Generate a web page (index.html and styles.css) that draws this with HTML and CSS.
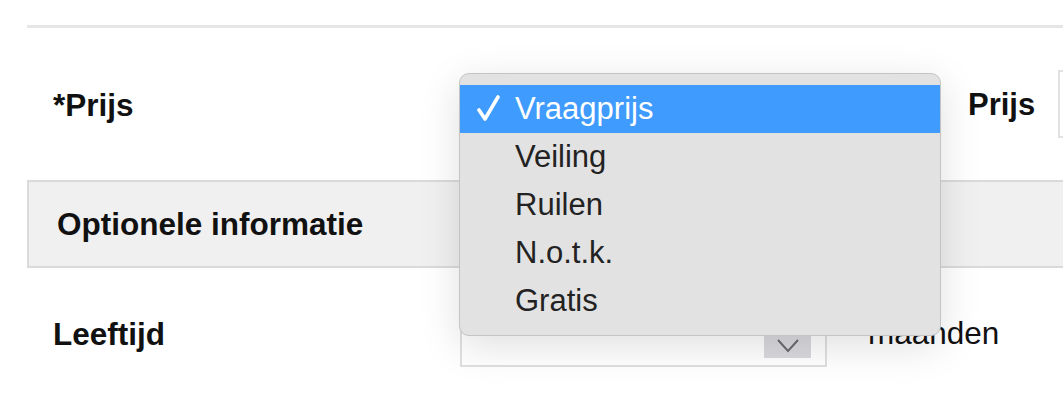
FILE: index.html
```html
<!DOCTYPE html>
<html lang="nl">
<head>
<meta charset="utf-8">
<title>Prijs</title>
<link rel="stylesheet" href="styles.css">
</head>
<body>
<div class="form">
  <div class="row row-price">
    <div class="label">*Prijs</div>
    <div class="field"></div>
    <div class="label-right">Prijs</div>
    <div class="input"></div>
  </div>
  <div class="section">Optionele informatie</div>
  <div class="row row-age">
    <div class="label">Leeftijd</div>
    <div class="field">
      <div class="select">
        <span class="arrow">
          <svg width="47" height="46" viewBox="0 0 47 46"><path d="M14 28 L24 39 L34 28" fill="none" stroke="#6b6b70" stroke-width="2"/></svg>
        </span>
      </div>
    </div>
    <div class="unit">maanden</div>
  </div>
  <div class="menu">
    <div class="item selected">
      <svg class="check" width="24" height="28" viewBox="0 0 24 28"><path d="M2 15 L8 24 L21 2" fill="none" stroke="#fff" stroke-width="3.6" stroke-linecap="round" stroke-linejoin="round"/></svg>
      Vraagprijs
    </div>
    <div class="item">Veiling</div>
    <div class="item">Ruilen</div>
    <div class="item">N.o.t.k.</div>
    <div class="item">Gratis</div>
  </div>
</div>
</body>
</html>
```
FILE: styles.css
```css
html, body {
  margin: 0;
  padding: 0;
  background: #ffffff;
  overflow: hidden;
}
body {
  font-family: "Liberation Sans", Arial, sans-serif;
  color: #111;
}
.form {
  position: relative;
  margin-top: 25px;
  margin-left: 27px;
  border-top: 3px solid #e6e6e6;
  overflow: hidden;
}
.row {
  display: flex;
  align-items: center;
}
.row > * {
  flex-shrink: 0;
}
.row-price {
  height: 152px;
}
.label {
  width: 433px;
  padding-left: 26px;
  box-sizing: border-box;
  font-weight: bold;
  font-size: 31.5px;
  padding-top: 2px;
}
.field {
  width: 367px;
}
.select {
  height: 64px;
  border: 2px solid #e0e0e0;
  box-sizing: border-box;
  background: #fff;
  display: flex;
  align-items: center;
  justify-content: flex-end;
  padding-right: 14px;
}
.arrow {
  display: block;
  width: 47px;
  height: 46px;
  background: #dadade;
}
.arrow svg {
  display: block;
}
.label-right {
  margin-left: 141px;
  font-weight: bold;
  font-size: 31px;
  padding-top: 2px;
}
.input {
  margin-left: 23px;
  width: 80px;
  height: 68px;
  border: 2px solid #e2e2e2;
  box-sizing: border-box;
}
.section {
  height: 88px;
  box-sizing: border-box;
  border: 2px solid #dadada;
  border-right: none;
  background: #f0f0f0;
  padding-left: 28px;
  display: flex;
  align-items: center;
  font-weight: bold;
  font-size: 31.5px;
}
.row-age {
  height: 130px;
}
.row-age .field {
  margin-top: 4px;
}
.unit {
  margin-left: 41px;
  font-size: 31.5px;
  color: #111;
}
.menu {
  position: absolute;
  left: 432px;
  top: 45px;
  width: 482px;
  height: 263px;
  box-sizing: border-box;
  background: #e2e2e2;
  border: 1.5px solid #c4c4c4;
  border-radius: 10px;
  box-shadow: 0 10px 40px rgba(0, 0, 0, 0.13);
  padding-top: 11px;
}
.item {
  position: relative;
  height: 48px;
  display: flex;
  align-items: center;
  padding-left: 55px;
  font-size: 31px;
  color: #222;
}
.item.selected {
  background: #3f9bfd;
  color: #fff;
}
.check {
  position: absolute;
  left: 17px;
  top: 10px;
}
```
